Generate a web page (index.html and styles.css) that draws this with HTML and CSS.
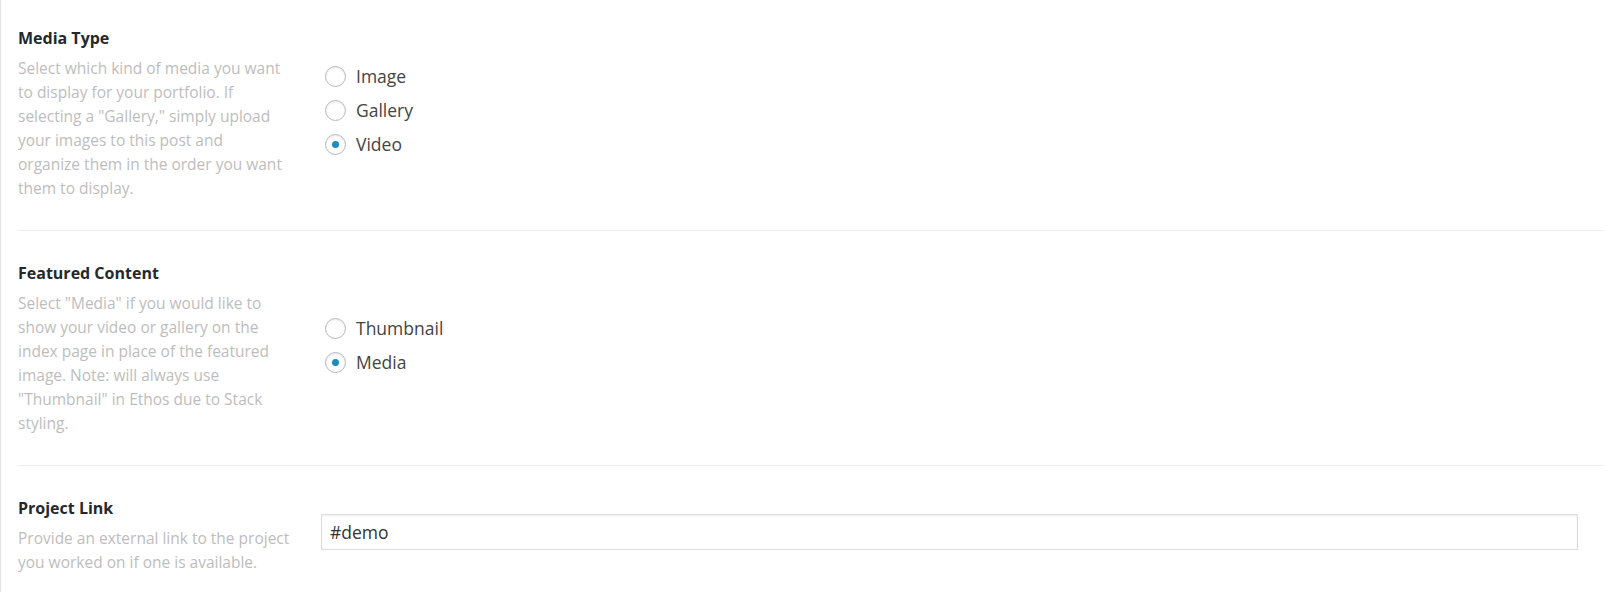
FILE: index.html
```html
<!DOCTYPE html>
<html lang="en">
<head>
    <meta charset="UTF-8">
    <meta name="viewport" content="width=device-width, initial-scale=1.0">
    <title>Portfolio Settings</title>
    <link rel="stylesheet" href="styles.css">
</head>
<body>
    <div class="metabox">
        <div class="field">
            <div class="field-label">
                <h4>Media Type</h4>
                <p>Select which kind of media you want to display for your portfolio. If selecting a "Gallery," simply upload your images to this post and organize&nbsp;them in the order you want them to display.</p>
            </div>
            <div class="field-input radio-list">
                <label class="radio"><input type="radio" name="media_type" value="image"> Image</label>
                <label class="radio"><input type="radio" name="media_type" value="gallery"> Gallery</label>
                <label class="radio"><input type="radio" name="media_type" value="video" checked> Video</label>
            </div>
        </div>

        <div class="field">
            <div class="field-label">
                <h4>Featured Content</h4>
                <p>Select "Media" if you would like to show your video or gallery on the index page in place of the featured image. Note: will always use "Thumbnail" in Ethos due to Stack styling.</p>
            </div>
            <div class="field-input radio-list">
                <label class="radio"><input type="radio" name="featured" value="thumbnail"> Thumbnail</label>
                <label class="radio"><input type="radio" name="featured" value="media" checked> Media</label>
            </div>
        </div>

        <div class="field">
            <div class="field-label">
                <h4>Project Link</h4>
                <p>Provide an external link to the project you worked on if one is available.</p>
            </div>
            <div class="field-input">
                <input type="text" class="text-input" value="#demo">
            </div>
        </div>
    </div>
</body>
</html>
```

FILE: styles.css
```css
/* Basic styles */
body {
    font-family: "Open Sans", Arial, sans-serif;
    margin: 0;
    padding: 0;
    background-color: #fff;
}
.metabox {
    border-left: 1px solid #e2e2e2;
    padding: 0 3px 0 17px;
    min-height: 100vh;
    box-sizing: border-box;
}
.field {
    display: grid;
    grid-template-columns: 280px 1fr;
    column-gap: 23px;
    align-items: center;
    padding: 32px 0 30px;
    border-bottom: 1px solid #eee;
}
.field:first-child {
    padding-top: 28px;
}
.field:last-child {
    border-bottom: none;
}
.field-label h4 {
    margin: 0 0 8px;
    font-size: 16px;
    line-height: 20px;
    font-weight: 700;
    color: #23282d;
}
.field-label p {
    margin: 0;
    width: 276px;
    font-size: 15.5px;
    line-height: 24px;
    color: #bdbdbd;
}
.field-input {
    margin-bottom: 8px;
}
.radio-list {
    display: flex;
    flex-direction: column;
}
.radio {
    display: flex;
    align-items: center;
    gap: 10px;
    height: 34px;
    font-size: 17.5px;
    color: #444;
    cursor: pointer;
}
.radio input {
    appearance: none;
    -webkit-appearance: none;
    width: 21px;
    height: 21px;
    margin: 0 0 0 4px;
    border: 1px solid #b4b9be;
    border-radius: 50%;
    background-color: #fff;
    box-shadow: inset 0 1px 2px rgba(0, 0, 0, 0.1);
    display: flex;
    align-items: center;
    justify-content: center;
}
.radio input:checked::before {
    content: "";
    width: 7px;
    height: 7px;
    border-radius: 50%;
    background-color: #1e8cbe;
}
.text-input {
    display: block;
    width: calc(100% - 25px);
    height: 36px;
    box-sizing: border-box;
    padding: 0 8px;
    border: 1px solid #ddd;
    box-shadow: inset 0 1px 2px rgba(0, 0, 0, 0.07);
    font-family: "Open Sans", Arial, sans-serif;
    font-size: 17.5px;
    color: #333;
    background-color: #fff;
    outline: none;
}
```
